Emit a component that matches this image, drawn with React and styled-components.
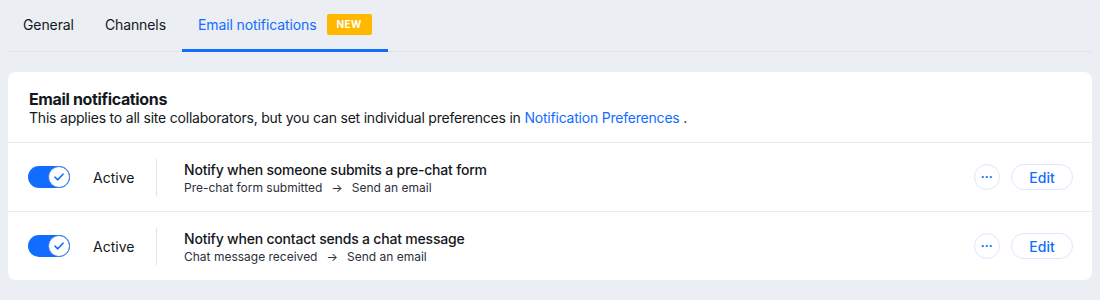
import styled, { createGlobalStyle } from "styled-components";

const GlobalStyle = createGlobalStyle`
  body {
    margin: 0;
    background: #ebeef3;
    font-family: "Inter", "Noto Sans", sans-serif;
    color: #131720;
  }
`;

const rules = [
  {
    title: "Notify when someone submits a pre-chat form",
    trigger: "Pre-chat form submitted",
    action: "Send an email",
  },
  {
    title: "Notify when contact sends a chat message",
    trigger: "Chat message received",
    action: "Send an email",
  },
];

export default function App() {
  return (
    <>
      <GlobalStyle />
      <Page>
        <Tabs>
          <Tab>General</Tab>
          <Tab>Channels</Tab>
          <Tab $active>
            Email notifications
            <Badge>NEW</Badge>
          </Tab>
        </Tabs>
        <Card>
          <CardHeader>
            <Title>Email notifications</Title>
            <Subtitle>
              This applies to all site collaborators, but you can set individual
              preferences in <Link>Notification Preferences</Link> .
            </Subtitle>
          </CardHeader>
          {rules.map((rule) => (
            <Row key={rule.title}>
              <Toggle>
                <Knob>
                  <svg width="10" height="8" viewBox="0 0 10 8">
                    <path
                      d="M1 4.2 L3.8 6.8 L9 1.2"
                      fill="none"
                      stroke="#116dff"
                      strokeWidth="1.6"
                      strokeLinecap="round"
                      strokeLinejoin="round"
                    />
                  </svg>
                </Knob>
              </Toggle>
              <Status>Active</Status>
              <Separator />
              <RuleText>
                <RuleTitle>{rule.title}</RuleTitle>
                <RuleFlow>
                  {rule.trigger}
                  <Arrow>→</Arrow>
                  {rule.action}
                </RuleFlow>
              </RuleText>
              <Actions>
                <IconButton>···</IconButton>
                <EditButton>Edit</EditButton>
              </Actions>
            </Row>
          ))}
        </Card>
      </Page>
    </>
  );
}

const Page = styled.div`
  padding: 0 8px;
`;

const Tabs = styled.div`
  display: flex;
  align-items: stretch;
  height: 51px;
  border-bottom: 1px solid #dfe3ea;
`;

const Tab = styled.div`
  display: flex;
  align-items: center;
  gap: 10px;
  padding: 0 16px 0 ${(p) => (p.$active ? "16px" : "15px")};
  font-size: 14px;
  letter-spacing: -0.1px;
  color: ${(p) => (p.$active ? "#116dff" : "#131720")};
  border-bottom: 3px solid ${(p) => (p.$active ? "#116dff" : "transparent")};
  margin-bottom: -1px;
`;

const Badge = styled.span`
  background: #ffb700;
  color: #fff;
  font-size: 10px;
  font-weight: 700;
  letter-spacing: 0.4px;
  padding: 4px 10px;
  border-radius: 2px;
  line-height: 13px;
`;

const Card = styled.div`
  margin-top: 20px;
  background: #fff;
  border-radius: 8px;
  overflow: hidden;
`;

const CardHeader = styled.div`
  padding: 17px 21px 15px;
  border-bottom: 1px solid #e8ebf0;
`;

const Title = styled.div`
  font-size: 16px;
  font-weight: 700;
  line-height: 20px;
  letter-spacing: -0.35px;
`;

const Subtitle = styled.div`
  font-size: 14px;
  line-height: 18px;
  letter-spacing: -0.21px;
`;

const Link = styled.span`
  color: #116dff;
`;

const Row = styled.div`
  display: flex;
  align-items: center;
  height: 68px;
  padding: 0 19px 0 20px;
  & + & {
    border-top: 1px solid #e8ebf0;
  }
`;

const Toggle = styled.div`
  width: 42px;
  height: 22px;
  border-radius: 11px;
  background: #116dff;
  position: relative;
  flex-shrink: 0;
`;

const Knob = styled.div`
  position: absolute;
  right: 0;
  top: 0;
  width: 20px;
  height: 20px;
  border-radius: 50%;
  background: #fff;
  border: 1px solid #3f7fe6;
  display: flex;
  align-items: center;
  justify-content: center;
`;

const Status = styled.div`
  font-size: 14px;
  margin-left: 23px;
  width: 63px;
`;

const Separator = styled.div`
  width: 1px;
  height: 37px;
  background: #e0e4ea;
`;

const RuleText = styled.div`
  flex: 1;
  margin-left: 27px;
  padding-top: 2px;
  display: flex;
  flex-direction: column;
  gap: 2px;
`;

const RuleTitle = styled.div`
  font-size: 14px;
  font-weight: 500;
  letter-spacing: -0.2px;
`;

const RuleFlow = styled.div`
  font-size: 12px;
  color: #2b303b;
`;

const Arrow = styled.span`
  margin: 0 9px;
`;

const Actions = styled.div`
  display: flex;
  gap: 11px;
  align-items: center;
`;

const IconButton = styled.button`
  width: 26px;
  height: 26px;
  border-radius: 50%;
  border: 1px solid #dbe7fd;
  background: #fff;
  color: #116dff;
  font-size: 12px;
  font-weight: 700;
  padding: 0;
  line-height: 1;
`;

const EditButton = styled.button`
  width: 62px;
  height: 26px;
  border-radius: 13px;
  border: 1px solid #dbe7fd;
  background: #fff;
  color: #116dff;
  font-family: inherit;
  font-size: 14px;
  font-weight: 500;
  padding: 0;
`;
